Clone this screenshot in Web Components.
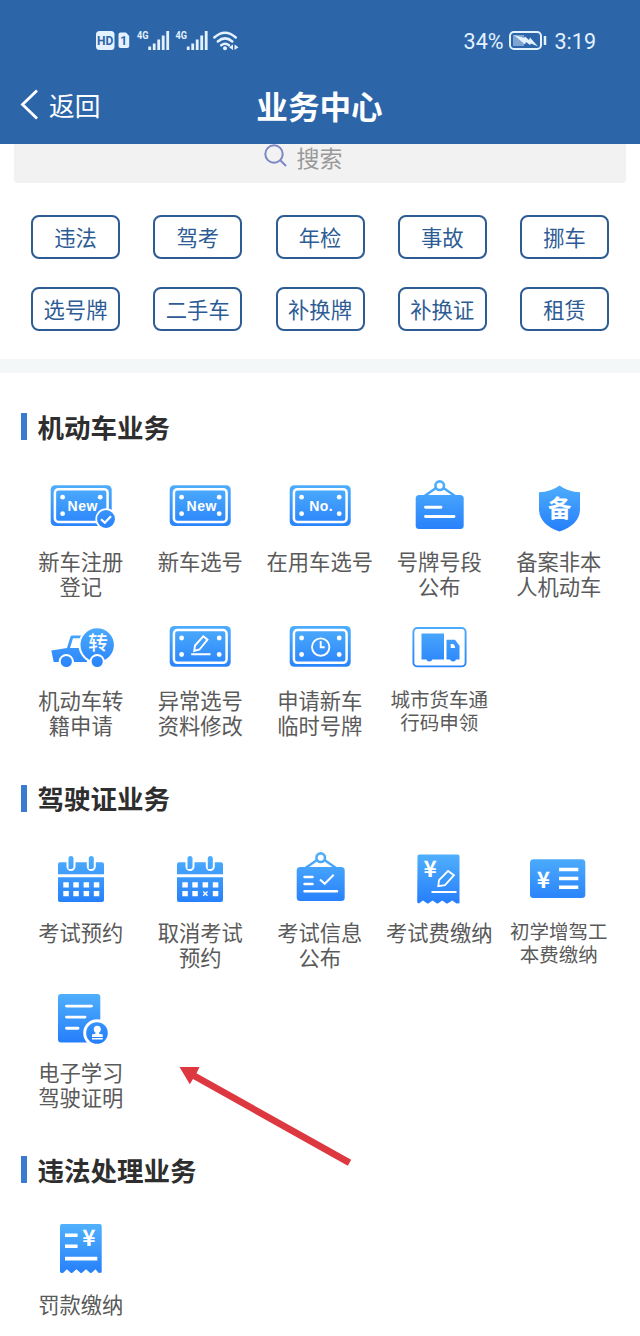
<!DOCTYPE html>
<html lang="zh-CN">
<head>
    <meta charset="utf-8" />
    <title>业务中心</title>
    <meta name="viewport" content="width=device-width, initial-scale=1">

    <style>
        body {
          --brand: #2c66a9;
          --chip: #2d5c95;
          position: relative;
          margin: 0;
          height: 1336px;
          overflow: hidden;
          background: #fff;
          color: #5a5a5a;
          font-family: "Noto Sans CJK SC", sans-serif;
        }
    </style>
</head>
<body>
  <app-header>
    <status-bar slot="status"></status-bar>
    <span slot="back">返回</span>
    业务中心
  </app-header>
  <search-box>搜索</search-box>
  <chip-list>
    <quick-chip>违法</quick-chip>
    <quick-chip>驾考</quick-chip>
    <quick-chip>年检</quick-chip>
    <quick-chip>事故</quick-chip>
    <quick-chip>挪车</quick-chip>
    <quick-chip>选号牌</quick-chip>
    <quick-chip>二手车</quick-chip>
    <quick-chip>补换牌</quick-chip>
    <quick-chip>补换证</quick-chip>
    <quick-chip>租赁</quick-chip>
  </chip-list>

  <service-section>
    <span slot="title">机动车业务</span>
    <service-item icon="register">新车注册<br>登记</service-item>
    <service-item icon="new">新车选号</service-item>
    <service-item icon="number">在用车选号</service-item>
    <service-item icon="board">号牌号段<br>公布</service-item>
    <service-item icon="shield">备案非本<br>人机动车</service-item>
    <service-item icon="transfer">机动车转<br>籍申请</service-item>
    <service-item icon="edit">异常选号<br>资料修改</service-item>
    <service-item icon="clock">申请新车<br>临时号牌</service-item>
    <service-item icon="truck" small>城市货车通<br>行码申领</service-item>
  </service-section>

  <service-section>
    <span slot="title">驾驶证业务</span>
    <service-item icon="calendar">考试预约</service-item>
    <service-item icon="cancel">取消考试<br>预约</service-item>
    <service-item icon="exam">考试信息<br>公布</service-item>
    <service-item icon="fee">考试费缴纳</service-item>
    <service-item icon="card" small>初学增驾工<br>本费缴纳</service-item>
    <service-item icon="proof">电子学习<br>驾驶证明</service-item>
  </service-section>

  <service-section>
    <span slot="title">违法处理业务</span>
    <service-item icon="fine">罚款缴纳</service-item>
  </service-section>

  <pointer-arrow></pointer-arrow>

  <script>
    class StatusBar extends HTMLElement {
      constructor() {
        super();
        this.attachShadow({ mode: 'open' });

        const signal = x => [0, 1, 2, 3, 4]
          .map(i => `<path d="M${x + i * 4.5} 30V${[26.5, 23.5, 19.5, 15.5, 11][i]}"/>`).join('');

        this.shadowRoot.innerHTML = `
          <style>
            :host {
              display: flex;
              justify-content: space-between;
              align-items: center;
              height: 60px;
              padding: 20px 44px 0 96px;
              box-sizing: border-box;
              color: #e4f1ff;
              font: 21.5px Roboto, sans-serif;
            }
            svg { display: block; }
            .right { display: flex; align-items: center; gap: 5px; padding-top: 3px; }
            .right svg { margin-right: 2px; }
          </style>
          <svg width="146" height="40" fill="#e4f1ff" font-family="Roboto, sans-serif" font-weight="700">
            <rect y="11" width="18.5" height="19" rx="3.5"/>
            <text x="9.2" y="25.3" font-size="12" text-anchor="middle" fill="#2c66a9">HD</text>
            <path d="M24.5 12.5H30l3.2 3.5v10q0 2-2 2h-6.7q-2 0-2-2V14.5q0-2 2-2z"/>
            <text x="27.8" y="25" font-size="12" text-anchor="middle" fill="#2c66a9">1</text>
            <text x="41" y="19" font-size="11.5" textLength="11.5" lengthAdjust="spacingAndGlyphs">4G</text>
            <text x="79.5" y="19" font-size="11.5" textLength="11.5" lengthAdjust="spacingAndGlyphs">4G</text>
            <g fill="none" stroke="#e4f1ff" stroke-width="2.8">
              ${signal(53.7)}
              ${signal(92.2)}
              <path d="M118.3 17.5q10.7-9.5 21.5 0M121.8 21.5q7.2-6.2 14.5 0M125.2 25.3q3.9-3.2 7.800 0" stroke-width="2.5" stroke-linecap="round"/>
            </g>
            <circle cx="129" cy="28.2" r="2"/>
            <path d="M137 24.5v5.500l-4-2.700zM138.5 24.5v5.500l4-2.700z"/>
          </svg>
          <div class="right">
            <span>34%</span>
            <svg width="39" height="21">
              <rect x="1" y="1" width="31" height="17" rx="4" fill="none" stroke="#e4f1ff" stroke-width="2"/>
              <rect x="4" y="4" width="11" height="11" fill="#7fa5d3"/>
              <path d="M5 4l10 3 1-1.500 4 3.500 1-2.500 8 9-7-3-1 1.500-4-3-1 2.500z" fill="#e4f1ff"/>
              <path d="M36 5v9" stroke="#e4f1ff" stroke-width="2.5"/>
            </svg>
            <span>3:19</span>
          </div>`;
      }
    }
    customElements.define('status-bar', StatusBar);

    class AppHeader extends HTMLElement {
      constructor() {
        super();
        this.attachShadow({ mode: 'open' });
        this.shadowRoot.innerHTML = `
          <style>
            :host {
              display: block;
              height: 144px;
              background: var(--brand);
              color: #fff;
            }
            nav {
              display: grid;
              grid-template-columns: 1fr auto 1fr;
              align-items: center;
              height: 84px;
              padding: 6px 21px 0 20px;
              box-sizing: border-box;
            }
            .back {
              display: flex;
              align-items: center;
              gap: 10px;
              font-size: 25.7px;
              line-height: 36px;
            }
            h1 {
              margin: 0;
              font-size: 31.6px;
              line-height: 44px;
              font-weight: 700;
            }
          </style>
          <slot name="status"></slot>
          <nav>
            <div class="back">
              <svg width="19" height="32" fill="none" stroke="#fff" stroke-width="2.8"><path d="M17 1.500L2.500 15.500L17 29.500"/></svg>
              <slot name="back"></slot>
            </div>
            <h1><slot></slot></h1>
          </nav>`;
      }
    }
    customElements.define('app-header', AppHeader);

    class SearchBox extends HTMLElement {
      constructor() {
        super();
        this.attachShadow({ mode: 'open' });
        this.shadowRoot.innerHTML = `
          <style>
            :host {
              display: flex;
              justify-content: center;
              gap: 9px;
              height: 39px;
              margin: 0 14px;
              padding-right: 34px;
              box-sizing: border-box;
              background: #f2f2f2;
              border-radius: 0 0 4px 4px;
              color: #999;
              font-size: 23px;
              line-height: 26px;
            }
          </style>
          <svg width="24" height="26" fill="none" stroke="#7d86c6" stroke-width="2"><circle cx="10" cy="10" r="8.7"/><path d="M16.500 16.500l5.500 5.500"/></svg>
          <span><slot></slot></span>`;
      }
    }
    customElements.define('search-box', SearchBox);

    class ChipList extends HTMLElement {
      constructor() {
        super();
        this.attachShadow({ mode: 'open' });
        this.shadowRoot.innerHTML = `
          <style>
            :host {
              display: grid;
              grid-template-columns: repeat(5, 89px);
              grid-auto-rows: 43.5px;
              justify-content: space-between;
              row-gap: 28.5px;
              padding: 32px 31px 28.5px;
              border-bottom: 14px solid #f4f7f8;
            }
          </style>
          <slot></slot>`;
      }
    }
    customElements.define('chip-list', ChipList);

    class QuickChip extends HTMLElement {
      constructor() {
        super();
        this.attachShadow({ mode: 'open' });
        this.shadowRoot.innerHTML = `
          <style>
            :host {
              display: flex;
              justify-content: center;
              align-items: center;
              border: 2px solid var(--chip);
              border-radius: 8px;
              box-sizing: border-box;
              color: var(--chip);
              font-size: 21.3px;
              line-height: 30px;
            }
          </style>
          <slot></slot>`;
      }
    }
    customElements.define('quick-chip', QuickChip);

    class ServiceSection extends HTMLElement {
      constructor() {
        super();
        this.attachShadow({ mode: 'open' });
        this.shadowRoot.innerHTML = `
          <style>
            :host {
              display: block;
              padding: 40px 21px 5.7px;
            }
            h2 {
              display: flex;
              align-items: center;
              gap: 11px;
              height: 27px;
              margin: 0 0 36px;
              color: #2e2e2e;
              font-size: 26.5px;
              line-height: 26px;
              font-weight: 700;
            }
            h2::before {
              content: "";
              width: 5.5px;
              height: 27px;
              background: #3a7bd0;
            }
            .grid {
              display: grid;
              grid-template-columns: repeat(5, 119.5px);
              grid-auto-rows: 123.5px;
              row-gap: 16px;
            }
          </style>
          <h2><slot name="title"></slot></h2>
          <div class="grid"><slot></slot></div>`;
      }
    }
    customElements.define('service-section', ServiceSection);

    // everything below is drawn on a 72x60 canvas, .f = gradient fill, .s = gradient stroke, .w = white stroke
    const plate = `
      <rect class="f" x="5.7" y="9.2" width="61" height="40.8" rx="4.5"/>
      <rect class="w" x="9.9" y="13.2" width="52.7" height="32.8" rx="3.5" stroke-width="2.5"/>
      <g fill="#fff"><circle cx="17.6" cy="21.2" r="2.4"/><circle cx="55.2" cy="21.2" r="2.4"/><circle cx="17.6" cy="37.7" r="2.4"/><circle cx="55.2" cy="37.7" r="2.4"/></g>`;
    const newPlate = `${plate}<text class="latin" x="37.5" y="34.5" textLength="30">New</text>`;
    const board = `
      <rect class="f" x="12.7" y="19" width="48" height="34" rx="3.5"/>
      <path class="s" d="M33 12L21.5 20M40.5 12L52 20" stroke-width="2.4"/>
      <circle class="s" cx="36.7" cy="9.7" r="4.3" stroke-width="2.6"/>`;
    const calendar = last => `
      <path class="f" d="M13 26.3V16.3q0-2 2-2H57q2 0 2 2v10zM13 29.3H59V52q0 2-2 2H15q-2 0-2-2z"/>
      <path class="w" d="M26 10.5V18.5M46.3 10.5V18.5" stroke-width="9" stroke-linecap="round"/>
      <path class="s" d="M26 10.5v8.1h.01M46.3 10.5v8.1h.01" stroke-width="5" stroke-linecap="round"/>
      <path fill="#fff" d="M18.3 34.3h5.500v5.200h-5.500zm10 0h5.500v5.200h-5.500zm10.300 0h5.500v5.200h-5.500zm10.200 0h5.500v5.200h-5.500zM18.300 43h5.500v5.200h-5.500zm10 0h5.500v5.200h-5.500zm20.500 0h5.500v5.200h-5.500z"/>
      ${last}`;

    const icons = {
      register: `${newPlate}
        <circle class="f" cx="61" cy="43" r="9.8" style="stroke:#fff;stroke-width:1.7"/>
        <path class="w" d="M56 43.200l3.800 3.600 6.200-6.600" stroke-width="2.2"/>`,
      new: newPlate,
      number: `${plate}<text class="latin" x="37" y="34.5" textLength="23.5">No.</text>`,
      board: `${board}<path class="w" d="M22.500 31.300H38M22.500 40.500H51" stroke-width="2.9" stroke-linecap="round"/>`,
      shield: `
        <path class="f" d="M36.5 9.5Q45 16 57 16.2V34Q56 49 36.5 55.5Q17 49 16 34V16.2Q28 16 36.5 9.5z"/>
        <text x="36.8" y="40.5" font-size="23.5">备</text>`,
      transfer: `
        <path class="f" d="M6.3 34.5L22 32L25.500 20.500Q26 19.500 27 19.500H42V46H8.700z"/>
        <path fill="#fff" d="M28 22.300h9v9.700H25z"/>
        <circle class="f" cx="52.2" cy="29" r="17.7" style="stroke:#fff;stroke-width:2"/>
        <circle class="f" cx="21.3" cy="45.5" r="6.6" style="stroke:#fff;stroke-width:2"/>
        <circle class="f" cx="52.2" cy="45.5" r="6.6" style="stroke:#fff;stroke-width:2"/>
        <text class="medium" x="53" y="34" font-size="19.5">转</text>`,
      edit: `<g transform="translate(0 .8)">${plate}
        <path class="w" d="M30.200 34.200l.8-5.500 8.300-9.200 4.200 3.400-8 9.800zM27.200 37.400H46.500" stroke-width="1.9"/></g>`,
      clock: `<g transform="translate(0 .8)">${plate}
        <circle class="w" cx="36.7" cy="30.3" r="8.7" stroke-width="1.9"/>
        <path class="w" d="M36.700 24.300V30.500H40.700" stroke-width="1.9"/></g>`,
      truck: `
        <rect class="s" x="10.4" y="12" width="52.2" height="38.4" rx="4" stroke-width="1.9"/>
        <path class="f" d="M18.500 17.500H41v26H29.300q-.5 2-2.900 2t-2.900-2H18.500zM43.500 23.800h8.500l4.500 6v13.700H53q-.5 2-2.900 2t-2.900-2H43.500z"/>
        <path fill="#fff" d="M47.700 28h2.500q2 1.500 2 4h-4.500z"/>`,
      calendar: calendar('<path fill="#fff" d="M38.6 43h5.500v5.200h-5.500z"/>'),
      cancel: calendar('<path class="w" d="M39.2 43.5l4.3 4.3m0-4.3l-4.3 4.3" stroke-width="1.3"/>'),
      exam: `${board}
        <path class="w" d="M20.500 29H28.500M20.500 36H28.500M20.500 43.200H53" stroke-width="2.5" stroke-linecap="round"/>
        <path class="w" d="M36 31.500l4.700 4.300 9-9" stroke-width="2"/>`,
      fee: `
        <path class="f" d="M14.500 8.600q0-2 2-2H54.500q2 0 2 2V55.300l-3 .3-4.300-3.200-4.700 3.200h-1l-4.300-3.200-4.300 3.200h-1l-4.300-3.200-4.300 3.200h-1l-4.300-3.200-4.200 3.200-1.600-1z"/>
        <text class="yen" x="27.2" y="28.8">¥</text>
        <path class="w" d="M35.300 38.200l.7-6 9-9.200 6 4.200-9 10zM28.500 44H53.500" stroke-width="1.8"/>`,
      card: `
        <rect class="f" x="7" y="11.3" width="55.3" height="38.7" rx="3.5"/>
        <text class="yen" x="20.3" y="39.5">¥</text>
        <path class="w" d="M36 21.600H55.300M36 30.500H55.300M36 39.300H55.300" stroke-width="3.5"/>`,
      proof: `
        <rect class="f" x="13" y="7.1" width="42.3" height="48.4" rx="3"/>
        <path class="w" d="M21.500 19.100H46.500M21.500 30.100H40M21.500 41.200H33" stroke-width="2.9" stroke-linecap="round"/>
        <circle class="f" cx="52" cy="46" r="12.3" style="stroke:#fff;stroke-width:3"/>
        <circle cx="52.3" cy="42.3" r="3.5" fill="#fff"/>
        <path fill="#fff" d="M50.500 43.500h3.600v3.300l3.600.7v2.500H47v-2.500l3.500-.7zM47 50.900h10.700v1.500H47z"/>`,
      fine: `
        <path class="f" d="M15 6.900q0-2 2-2H54.700q2 0 2 2V53.500l-3 .5-3.200-3.700-4.200 3.700h-1l-4.300-3.700-4.300 3.700h-1l-4.300-3.700-4.300 3.700h-1l-4.300-3.700-3.800 3.700H16.500l-1.500-1z"/>
        <text class="yen" x="43.800" y="27.3">¥</text>
        <path class="w" d="M20 16.300H32.600M20 27.300H32.600M20 39.600H52.300" stroke-width="3.6"/>`
    };

    class ServiceItem extends HTMLElement {
      constructor() {
        super();
        this.attachShadow({ mode: 'open' });
        this.shadowRoot.innerHTML = `
          <style>
            :host {
              display: flex;
              flex-direction: column;
              align-items: center;
              font-size: 21.3px;
              line-height: 25px;
              text-align: center;
              white-space: nowrap;
            }
            :host([small]) {
              font-size: 19.5px;
              line-height: 23px;
            }
            svg {
              width: 72px;
              height: 60px;
              margin-bottom: 11.5px;
              overflow: visible;
            }
            :host([small]) svg { margin-bottom: 11px; }
            .f { fill: url(#blue); }
            .s { fill: none; stroke: url(#blue); }
            .w { fill: none; stroke: #fff; }
            text {
              fill: #fff;
              font-weight: 700;
              text-anchor: middle;
            }
            .medium { font-weight: 500; }
            .latin { font-family: "Liberation Sans", sans-serif; font-size: 14px; }
            .yen { font-size: 22.5px; }
          </style>
          <svg viewBox="0 0 72 60">
            <defs>
              <linearGradient id="blue" gradientUnits="userSpaceOnUse" x1="0" y1="6" x2="0" y2="55">
                <stop offset="0" stop-color="#50b0fc"/>
                <stop offset="1" stop-color="#267ffb"/>
              </linearGradient>
            </defs>
            ${icons[this.getAttribute('icon')]}
          </svg>
          <div><slot></slot></div>`;
      }
    }
    customElements.define('service-item', ServiceItem);

    class PointerArrow extends HTMLElement {
      constructor() {
        super();
        this.attachShadow({ mode: 'open' });
        this.shadowRoot.innerHTML = `
          <style>
            :host {
              display: block;
              position: absolute;
              left: 179px;
              top: 1066px;
            }
            svg { display: block; }
          </style>
          <svg width="174" height="101"><path fill="#dd3740" d="M.5 1L20.5 1L17.5 7.3L172.2 93.8L168.800 99.700L14 13L10.800 18.300z"/></svg>`;
      }
    }
    customElements.define('pointer-arrow', PointerArrow);
  </script>
</body>
</html>
